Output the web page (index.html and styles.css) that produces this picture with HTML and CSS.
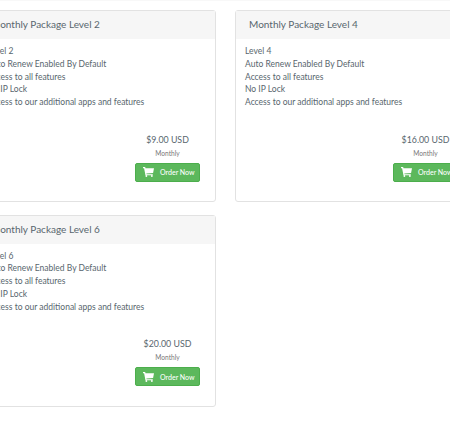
FILE: index.html
```html
<!DOCTYPE html>
<html lang="en">

<head>
    <meta charset="UTF-8">
    <title>Packages</title>
    <link rel="stylesheet" href="styles.css">
</head>

<body>
    <div class="packages">
        <div class="package">
            <div class="package-title">Monthly Package Level 2</div>
            <div class="package-body">
                <div class="package-features">
                    <div>Level 2</div>
                    <div>Auto Renew Enabled By Default</div>
                    <div>Access to all features</div>
                    <div>No IP Lock</div>
                    <div>Access to our additional apps and features</div>
                </div>
                <div class="package-order">
                    <div class="price">$9.00 USD</div>
                    <div class="cycle">Monthly</div>
                    <a href="#" class="order-btn">
                        <svg class="cart" viewBox="0 0 18 16"><path d="M0 0h3.500l.6 2H18l-1.500 7.500-11 1 .3 1.200H16V13.500H4L1.800 1.800H0z"/><circle cx="5.500" cy="14.500" r="1.500"/><circle cx="14.500" cy="14.500" r="1.500"/></svg>
                        Order Now
                    </a>
                </div>
            </div>
        </div>

        <div class="package">
            <div class="package-title">Monthly Package Level 4</div>
            <div class="package-body">
                <div class="package-features">
                    <div>Level 4</div>
                    <div>Auto Renew Enabled By Default</div>
                    <div>Access to all features</div>
                    <div>No IP Lock</div>
                    <div>Access to our additional apps and features</div>
                </div>
                <div class="package-order">
                    <div class="price">$16.00 USD</div>
                    <div class="cycle">Monthly</div>
                    <a href="#" class="order-btn">
                        <svg class="cart" viewBox="0 0 18 16"><path d="M0 0h3.500l.6 2H18l-1.500 7.500-11 1 .3 1.200H16V13.500H4L1.800 1.800H0z"/><circle cx="5.500" cy="14.500" r="1.500"/><circle cx="14.500" cy="14.500" r="1.500"/></svg>
                        Order Now
                    </a>
                </div>
            </div>
        </div>

        <div class="package">
            <div class="package-title">Monthly Package Level 6</div>
            <div class="package-body">
                <div class="package-features">
                    <div>Level 6</div>
                    <div>Auto Renew Enabled By Default</div>
                    <div>Access to all features</div>
                    <div>No IP Lock</div>
                    <div>Access to our additional apps and features</div>
                </div>
                <div class="package-order">
                    <div class="price">$20.00 USD</div>
                    <div class="cycle">Monthly</div>
                    <a href="#" class="order-btn">
                        <svg class="cart" viewBox="0 0 18 16"><path d="M0 0h3.500l.6 2H18l-1.500 7.500-11 1 .3 1.200H16V13.500H4L1.800 1.800H0z"/><circle cx="5.500" cy="14.500" r="1.500"/><circle cx="14.500" cy="14.500" r="1.500"/></svg>
                        Order Now
                    </a>
                </div>
            </div>
        </div>
    </div>
</body>

</html>
```

FILE: styles.css
```css
html,
body {
    overflow: hidden;
}

body {
    font-family: 'Lato', 'Open Sans', Arial, sans-serif;
    margin: 0;
    background-color: white;
    color: #58666e;
    width: 450px;
    height: 422px;
    border-top: 1px solid #f8f8f8;
}

.packages {
    display: grid;
    grid-template-columns: 239px 239px;
    gap: 12.5px 19px;
    margin: 9px 0 0 -23px;
    width: 497px;
}

.package {
    height: 192px;
    box-sizing: border-box;
    background-color: white;
    border: 1px solid #e2e2e2;
    border-radius: 3px;
}

.package-title {
    height: 28px;
    line-height: 27px;
    padding-left: 13px;
    font-size: 10px;
    background-color: #f6f6f6;
}

.package-body {
    padding: 6px 15px 0 9px;
}

.package-features {
    font-size: 8.5px;
    line-height: 12.8px;
}

.package-order {
    width: 65px;
    margin: 24px 0 0 auto;
    text-align: center;
}

.price {
    font-size: 8.8px;
    line-height: 14px;
    white-space: nowrap;
}

.cycle {
    font-size: 6.6px;
    line-height: 10px;
    margin-top: 1px;
    color: #777;
}

.order-btn {
    display: flex;
    align-items: center;
    box-sizing: border-box;
    height: 19px;
    margin-top: 5px;
    padding-left: 7px;
    font-size: 7px;
    font-weight: 500;
    white-space: nowrap;
    text-decoration: none;
    color: white;
    background-color: #5cb85c;
    border: 1px solid #4cae4c;
    border-radius: 2px;
}

.cart {
    width: 11px;
    height: 10px;
    margin-right: 6px;
    fill: white;
}
```
